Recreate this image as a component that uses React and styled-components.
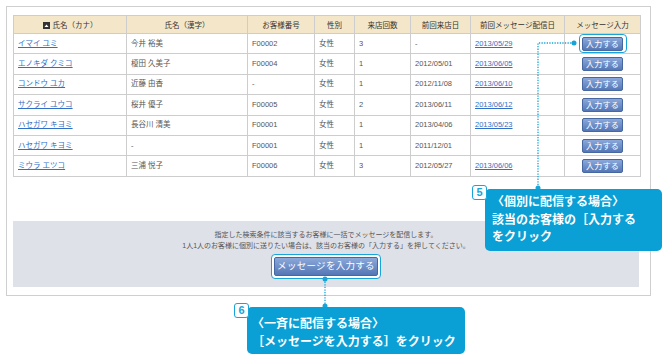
import React from 'react';
import styled, { createGlobalStyle } from 'styled-components';

const GlobalStyle = createGlobalStyle`
  body {
    margin: 0;
    background: #fff;
    font-family: 'Liberation Sans', 'Noto Sans CJK JP', sans-serif;
  }
`;

const Page = styled.div`
  position: relative;
  width: 670px;
  height: 360px;
  overflow: hidden;
`;

const Panel = styled.div`
  box-sizing: border-box;
  display: flex;
  flex-direction: column;
  gap: 44px;
  margin: 6px 0 0 6px;
  width: 645px;
  height: 290px;
  border: 1px solid #cfcfcf;
  padding: 8px 0 0 6px;
`;

const Table = styled.table`
  width: 627px;
  border-collapse: collapse;
  table-layout: fixed;
  font-size: 7.5px;
  color: #555;
`;

const HeadCell = styled.th`
  height: 17px;
  padding: 0;
  background: #f4e7c9;
  border: 1px solid #cdcdcd;
  color: #333;
  font-weight: normal;
  text-align: center;
  white-space: nowrap;
`;

const Row = styled.tr`
  height: 20.4px;
`;

const Cell = styled.td`
  height: 19px;
  padding: 0 4px;
  border: 1px solid #cdcdcd;
  line-height: 10px;
  text-align: ${p => (p.center ? 'center' : 'left')};
  white-space: nowrap;
`;

const NameLink = styled.a`
  color: #2f6fc6;
  text-decoration: underline;
`;

const SortIcon = styled.svg`
  width: 7px;
  height: 7px;
  vertical-align: -1px;
  margin-right: 3px;
`;

const Highlight = styled.span`
  display: inline-flex;
  vertical-align: middle;
  padding: ${p => (p.big ? '2px' : '1.5px 2.5px')};
  border: 1.5px solid ${p => (p.on ? '#17a4d8' : 'transparent')};
  border-radius: 4px;
  background: ${p => (p.on ? '#fff' : 'transparent')};
`;

const EntryButton = styled.button`
  display: flex;
  align-items: center;
  justify-content: center;
  width: ${p => (p.big ? '104px' : '41px')};
  height: ${p => (p.big ? '19px' : '14px')};
  padding: 0;
  border: 1px solid #46679f;
  border-radius: 2px;
  background: linear-gradient(#8aa8da, #5577b6);
  color: #fff;
  font-family: 'Noto Sans CJK JP', sans-serif;
  font-size: ${p => (p.big ? '9.5px' : '8px')};
  line-height: 1;
  letter-spacing: 0.3px;
`;

const Notice = styled.div`
  display: flex;
  flex-direction: column;
  align-items: center;
  width: 626px;
  height: 66px;
  box-sizing: border-box;
  background: #dfe1e9;
  padding-top: 8px;
  font-size: 7px;
  line-height: 11px;
  color: #555;
`;

const ButtonRow = styled.div`
  margin-top: 3px;
  display: flex;
`;

const Callout = styled.div`
  position: absolute;
  left: ${p => p.x}px;
  top: ${p => p.y}px;
  width: ${p => p.w}px;
  height: ${p => p.h}px;
  box-sizing: border-box;
  display: flex;
  flex-direction: column;
  padding: ${p => p.pad};
  background: #0a9fd5;
  border-radius: 5px;
  color: #fff;
  font-family: 'Noto Sans CJK JP', sans-serif;
  font-weight: 700;
  font-size: 12px;
  line-height: 17.5px;
  white-space: nowrap;
`;

const Badge = styled.div`
  position: absolute;
  left: -13px;
  top: -4px;
  width: 15px;
  height: 15px;
  box-sizing: border-box;
  border: 1.5px solid #17a4d8;
  border-radius: 3px;
  background: #fff;
  color: #17a4d8;
  font-family: 'Liberation Sans', sans-serif;
  font-weight: 700;
  font-size: 11px;
  line-height: 12px;
  text-align: center;
`;

const Leaders = styled.svg`
  position: absolute;
  left: 0;
  top: 0;
  width: 670px;
  height: 360px;
  pointer-events: none;
`;

const columns = [
  { label: '氏名（カナ）', width: 113, sort: true },
  { label: '氏名（漢字）', width: 121 },
  { label: 'お客様番号', width: 67 },
  { label: '性別', width: 40 },
  { label: '来店回数', width: 56 },
  { label: '前回来店日', width: 60 },
  { label: '前回メッセージ配信日', width: 94 },
  { label: 'メッセージ入力', width: 76 },
];

const customers = [
  { kana: 'イマイ ユミ', kanji: '今井 裕美', no: 'F00002', visits: 3, last: '-', sent: '2013/05/29' },
  { kana: 'エノキダ クミコ', kanji: '榎田 久美子', no: 'F00004', visits: 1, last: '2012/05/01', sent: '2013/06/05' },
  { kana: 'コンドウ ユカ', kanji: '近藤 由香', no: '-', visits: 1, last: '2012/11/08', sent: '2013/06/10' },
  { kana: 'サクライ ユウコ', kanji: '桜井 優子', no: 'F00005', visits: 2, last: '2013/06/11', sent: '2013/06/12' },
  { kana: 'ハセガワ キヨミ', kanji: '長谷川 清美', no: 'F00001', visits: 1, last: '2013/04/06', sent: '2013/05/23' },
  { kana: 'ハセガワ キヨミ', kanji: '-', no: 'F00001', visits: 1, last: '2011/12/01', sent: '' },
  { kana: 'ミウラ エツコ', kanji: '三浦 悦子', no: 'F00006', visits: 3, last: '2012/05/27', sent: '2013/06/06' },
];

const blue = '#17a4d8';

const App = () => {
  return (
    <Page>
      <GlobalStyle />
      <Panel>
        <Table>
          <colgroup>
            {columns.map(c => <col key={c.label} style={{ width: c.width }} />)}
          </colgroup>
          <thead>
            <tr>
              {columns.map(c => (
                <HeadCell key={c.label}>
                  {c.sort && (
                    <SortIcon viewBox="0 0 7 7">
                      <rect width="7" height="7" fill="#333" />
                      <path d="M1.5 5 L3.5 2.5 L5.5 5 Z" fill="#fff" />
                    </SortIcon>
                  )}
                  {c.label}
                </HeadCell>
              ))}
            </tr>
          </thead>
          <tbody>
            {customers.map((item, i) => (
              <Row key={i}>
                <Cell><NameLink href="#">{item.kana}</NameLink></Cell>
                <Cell>{item.kanji}</Cell>
                <Cell>{item.no}</Cell>
                <Cell>女性</Cell>
                <Cell>{item.visits}</Cell>
                <Cell>{item.last}</Cell>
                <Cell>{item.sent && <NameLink href="#">{item.sent}</NameLink>}</Cell>
                <Cell center>
                  <Highlight on={i === 0}>
                    <EntryButton>入力する</EntryButton>
                  </Highlight>
                </Cell>
              </Row>
            ))}
          </tbody>
        </Table>

        <Notice>
          <div>指定した検索条件に該当するお客様に一括でメッセージを配信します。</div>
          <div>1人1人のお客様に個別に送りたい場合は、該当のお客様の「入力する」を押してください。</div>
          <ButtonRow>
            <Highlight on big>
              <EntryButton big>メッセージを入力する</EntryButton>
            </Highlight>
          </ButtonRow>
        </Notice>
      </Panel>

      <Leaders viewBox="0 0 670 360">
        <g stroke={blue} strokeWidth="1.3" strokeDasharray="1.3 1.3" fill="none">
          <path d="M574 43 H538 V188" />
          <path d="M325 279 V306" />
        </g>
        <g fill={blue}>
          <circle cx="574" cy="43" r="2.5" />
          <circle cx="538" cy="188" r="2.5" />
          <circle cx="325" cy="279" r="2.5" />
          <circle cx="325" cy="306" r="2.5" />
        </g>
      </Leaders>

      <Callout x={485} y={189} w={177} h={62} pad="3px 0 0 7px">
        <Badge>5</Badge>
        <span>〈個別に配信する場合〉</span>
        <span>該当のお客様の［入力する</span>
        <span>をクリック</span>
      </Callout>

      <Callout x={247} y={307} w={218} h={47} pad="7px 0 0 5px">
        <Badge>6</Badge>
        <span>〈一斉に配信する場合〉</span>
        <span>［メッセージを入力する］をクリック</span>
      </Callout>
    </Page>
  );
};

export default App;
